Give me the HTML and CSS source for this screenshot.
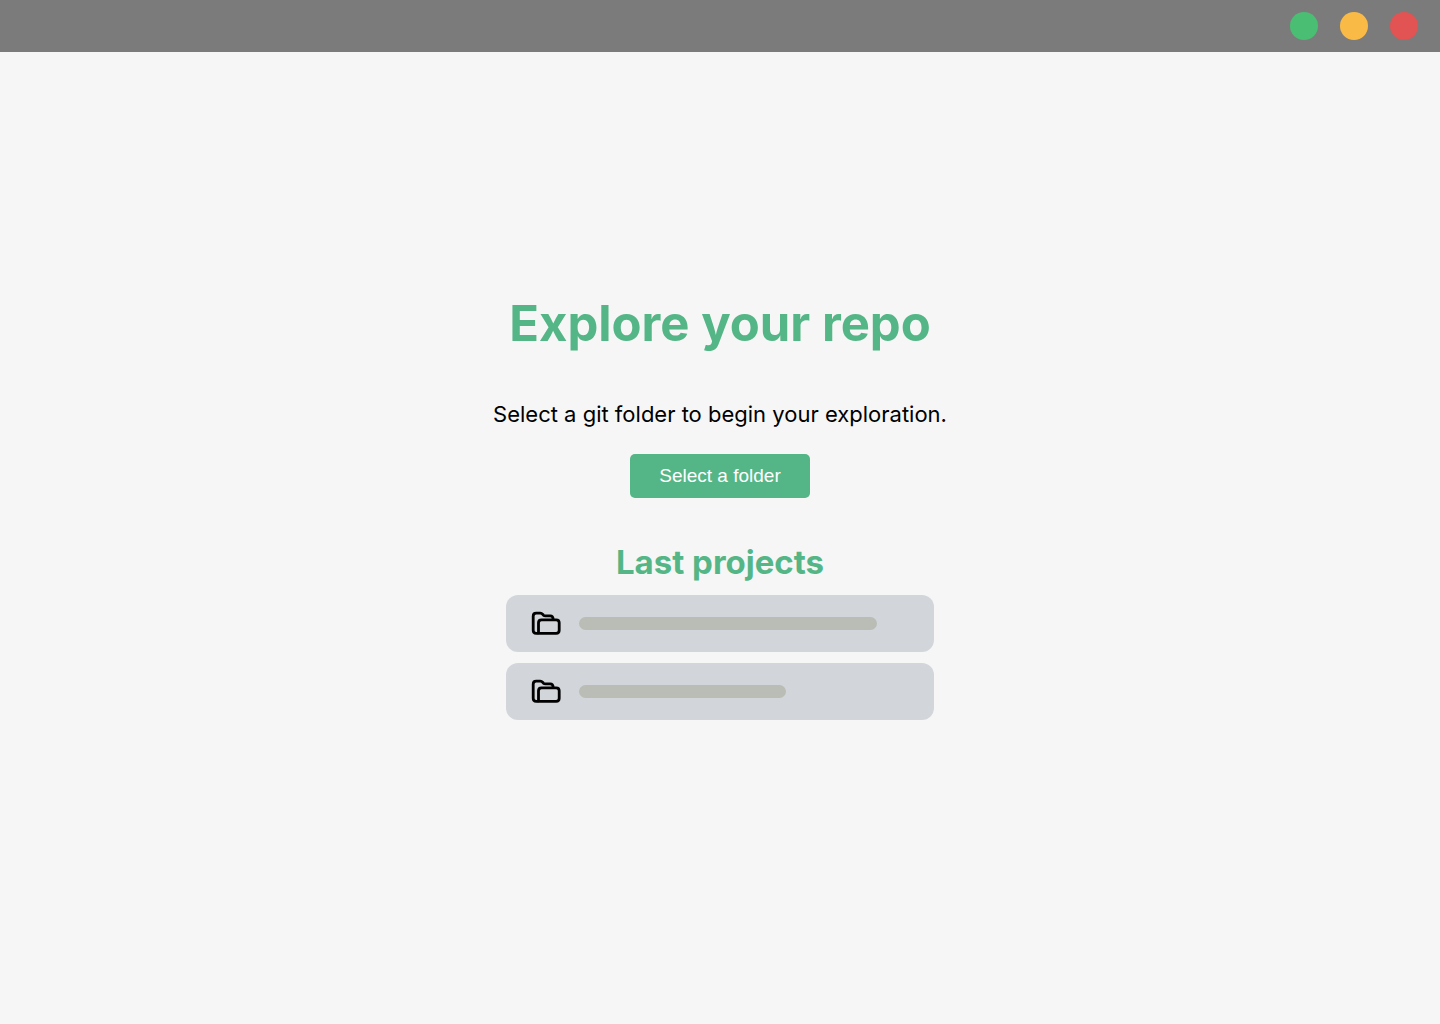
FILE: index.html
```html
<!DOCTYPE html>
<html lang="en">
<head>
  <meta charset="utf-8">
  <meta name="viewport" content="width=device-width, initial-scale=1">
  <title>Explore your repo</title>
  <link rel="stylesheet" href="styles.css">
</head>
<body>
  <header class="titlebar">
    <button class="dot dot-green" type="button" aria-label="Minimize"></button>
    <button class="dot dot-yellow" type="button" aria-label="Maximize"></button>
    <button class="dot dot-red" type="button" aria-label="Close"></button>
  </header>
  <main class="welcome">
    <h1 class="title">Explore your repo</h1>
    <p class="lead">Select a git folder to begin your exploration.</p>
    <button class="select-button" type="button">Select a folder</button>
    <h2 class="subtitle">Last projects</h2>
    <ul class="projects">
      <li class="project">
        <svg class="folder" viewBox="0 0 30 25" aria-hidden="true">
          <path d="M7.5 22.3H5.2Q2.2 22.3 2.2 19.3V5.2Q2.2 2.2 5.2 2.2H9.2Q10.8 2.2 11.7 3.3L12.5 4.2Q13.2 4.9 14.5 4.9H19.3Q22 4.9 22.2 8.5"/>
          <path d="M7.5 22.3V11.8Q7.5 8.8 10.5 8.8H25.2Q28.2 8.8 28.2 11.8V19.3Q28.2 22.3 25.2 22.3Z"/>
        </svg>
        <span class="bar bar-long"></span>
      </li>
      <li class="project">
        <svg class="folder" viewBox="0 0 30 25" aria-hidden="true">
          <path d="M7.5 22.3H5.2Q2.2 22.3 2.2 19.3V5.2Q2.2 2.2 5.2 2.2H9.2Q10.8 2.2 11.7 3.3L12.5 4.2Q13.2 4.9 14.5 4.9H19.3Q22 4.9 22.2 8.5"/>
          <path d="M7.5 22.3V11.8Q7.5 8.8 10.5 8.8H25.2Q28.2 8.8 28.2 11.8V19.3Q28.2 22.3 25.2 22.3Z"/>
        </svg>
        <span class="bar bar-short"></span>
      </li>
    </ul>
  </main>
</body>
</html>
```
FILE: styles.css
```css
* {
  box-sizing: border-box;
}

body {
  margin: 0;
  min-height: 100vh;
  display: flex;
  flex-direction: column;
  background: #f6f6f6;
  color: #000;
  font-family: Inter, "Liberation Sans", sans-serif;
}

.titlebar {
  display: flex;
  justify-content: flex-end;
  gap: 22px;
  padding: 12px 22px;
  background: #7b7b7b;
}

.dot {
  width: 28px;
  height: 28px;
  padding: 0;
  border: 0;
  border-radius: 50%;
}

.dot-green {
  background: #4abf73;
}

.dot-yellow {
  background: #fabb46;
}

.dot-red {
  background: #e25353;
}

.welcome {
  flex: 1;
  display: flex;
  flex-direction: column;
  align-items: center;
  justify-content: center;
  padding: 0 16px 62px;
}

.title,
.subtitle {
  margin: 0;
  color: #54b686;
  font-weight: 700;
  text-align: center;
}

.title {
  font-size: 49px;
  line-height: 60px;
}

.lead {
  margin: 44px 0 24px;
  font-size: 22px;
  line-height: 32px;
  text-align: center;
}

.select-button {
  width: 180px;
  height: 44px;
  padding: 0;
  border: 0;
  border-radius: 5px;
  background: #54b686;
  color: #fff;
  font-family: "Liberation Sans", Arial, sans-serif;
  font-size: 19px;
}

.subtitle {
  margin: 44px 0 13px;
  font-size: 33px;
  line-height: 40px;
}

.projects {
  display: flex;
  flex-direction: column;
  gap: 11px;
  width: 100%;
  max-width: 428px;
  margin: 0;
  padding: 0;
  list-style: none;
}

.project {
  display: flex;
  align-items: center;
  gap: 18px;
  padding: 16px 25px;
  border-radius: 12px;
  background: #d2d5da;
}

.folder {
  flex: none;
  width: 30px;
  height: 25px;
  fill: none;
  stroke: #000;
  stroke-width: 2.8;
  stroke-linejoin: round;
}

.bar {
  height: 13px;
  border-radius: 7px;
  background: #babdb6;
}

.bar-long {
  width: 298px;
}

.bar-short {
  width: 207px;
}
```
